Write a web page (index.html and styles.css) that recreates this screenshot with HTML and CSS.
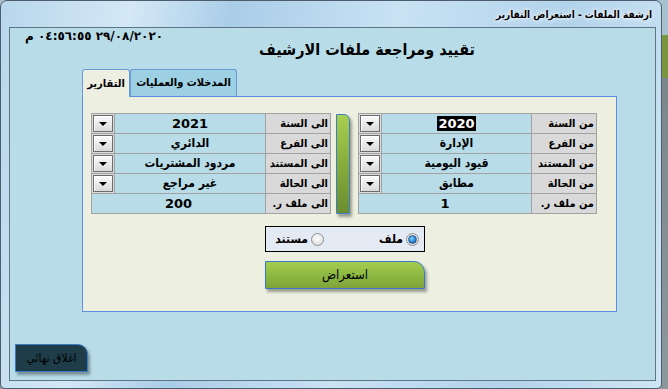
FILE: index.html
```html
<!DOCTYPE html>
<html lang="ar">
<head>
<meta charset="utf-8">
<link rel="stylesheet" href="styles.css">
</head>
<body>
<div class="window">
  <div class="titlebar"><span class="caption">ارشفة الملفات - استعراض التقارير</span></div>
  <div class="client">
    <div class="date" dir="rtl">٢٩/٠٨/٢٠٢٠ ٠٤:٥٦:٥٥ م</div>
    <div class="title" dir="rtl">تقييد ومراجعة ملفات الارشيف</div>
    <div class="tabs">
      <div class="tab active" dir="rtl">التقارير</div>
      <div class="tab" dir="rtl">المدخلات والعمليات</div>
    </div>
    <div class="panel">
      <div class="forms">
        <div class="grid">
          <div class="dd"><span class="ddbtn"></span></div><div class="val num">2021</div><div class="lab" dir="rtl">الى السنة</div>
          <div class="dd"><span class="ddbtn"></span></div><div class="val" dir="rtl">الدائري</div><div class="lab" dir="rtl">الى الفرع</div>
          <div class="dd"><span class="ddbtn"></span></div><div class="val" dir="rtl">مردود المشتريات</div><div class="lab" dir="rtl">الى المستند</div>
          <div class="dd"><span class="ddbtn"></span></div><div class="val" dir="rtl">غير مراجع</div><div class="lab" dir="rtl">الى الحالة</div>
          <div class="val wide num">200</div><div class="lab" dir="rtl">الى ملف ر.</div>
        </div>
        <div class="bar"></div>
        <div class="grid right">
          <div class="dd"><span class="ddbtn"></span></div><div class="val num"><span class="sel">2020</span></div><div class="lab" dir="rtl">من السنة</div>
          <div class="dd"><span class="ddbtn"></span></div><div class="val" dir="rtl">الإدارة</div><div class="lab" dir="rtl">من الفرع</div>
          <div class="dd"><span class="ddbtn"></span></div><div class="val" dir="rtl">قيود اليومية</div><div class="lab" dir="rtl">من المستند</div>
          <div class="dd"><span class="ddbtn"></span></div><div class="val" dir="rtl">مطابق</div><div class="lab" dir="rtl">من الحالة</div>
          <div class="val wide num">1</div><div class="lab" dir="rtl">من ملف ر.</div>
        </div>
      </div>
      <div class="radios" dir="rtl">
        <div class="opt first"><span class="radio checked"></span><span>ملف</span></div>
        <div class="opt"><span class="radio"></span><span>مستند</span></div>
      </div>
      <div class="btn" dir="rtl">استعراض</div>
    </div>
    <div class="close" dir="rtl">اغلاق نهائي</div>
  </div>
</div>
</body>
</html>
```

FILE: styles.css
```css
* { box-sizing: border-box; }

html, body {
  margin: 0;
  padding: 0;
}

body {
  width: 668px;
  height: 389px;
  overflow: hidden;
  background: linear-gradient(#a9c0cf 0, #a9c0cf 35px, #7a9440 35px, #7a9440 78px, #7d868d 78px, #8e979d 389px);
  font-family: "DejaVu Sans Condensed", "DejaVu Sans", sans-serif;
  color: #000;
}

.window {
  width: 662px;
  height: 389px;
  border: 1px solid #4d5d6b;
  border-radius: 7px 7px 5px 5px;
  background: linear-gradient(100deg, #b8d6ec 0%, #d4e8f6 18%, #aacde8 32%, #c9e2f4 55%, #b2d3eb 78%, #cfe5f5 100%);
  display: flex;
  flex-direction: column;
}

.titlebar {
  height: 26px;
  display: flex;
  justify-content: flex-end;
  align-items: center;
  padding-right: 9px;
}

.caption {
  font-size: 10px;
  font-weight: bold;
  text-shadow: 0 0 6px #fff, 0 0 3px #fff;
  direction: rtl;
}

.client {
  margin: 0 5px 0 8px;
  height: 354px;
  border: 1px solid #5e7383;
  background: #b8dde8;
}

.date {
  height: 12px;
  padding-top: 2px;
  padding-left: 15px;
  line-height: 13px;
  font-size: 12px;
  font-weight: bold;
  text-align: left;
  font-family: "DejaVu Sans", sans-serif;
}

.title {
  width: 400px;
  margin-left: 157px;
  height: 20px;
  line-height: 20px;
  font-size: 16px;
  font-weight: bold;
  text-align: center;
}

.tabs {
  margin-top: 9px;
  margin-left: 72px;
  height: 28px;
  display: flex;
  align-items: flex-start;
}

.tab {
  height: 27px;
  border: 1px solid #6a9ad6;
  border-bottom: none;
  border-radius: 3px 3px 0 0;
  background: #9dd0e3;
  font-size: 11px;
  font-weight: bold;
  line-height: 26px;
  text-align: center;
  width: 107px;
  white-space: nowrap;
  overflow: hidden;
}

.tab.active {
  width: 48px;
  height: 28px;
  background: #edefe0;
  position: relative;
  z-index: 1;
  line-height: 28px;
}

.panel {
  margin-top: -1px;
  margin-left: 72px;
  width: 535px;
  height: 216px;
  border: 1px solid #5d8fde;
  background: #edefe0;
}

.forms {
  margin-top: 16px;
  margin-left: 8px;
  display: flex;
  align-items: flex-start;
}

.grid {
  display: grid;
  grid-template-columns: 22px 150px 64px;
  grid-auto-rows: 19px;
  gap: 1px;
  padding: 1px;
  background: #a2a2a2;
}

.grid.right {
  grid-template-columns: 22px 149px 64px;
}

.dd {
  background: #dcdcdc;
  padding: 1px;
}

.ddbtn {
  display: flex;
  align-items: center;
  justify-content: center;
  width: 20px;
  height: 17px;
  border: 1px solid #6c6c6c;
  background: linear-gradient(#fbfbfb, #dadada);
  box-shadow: inset 1px 1px 0 #fff;
}

.ddbtn::after {
  content: "";
  width: 0;
  height: 0;
  border-left: 4px solid transparent;
  border-right: 4px solid transparent;
  border-top: 4px solid #000;
  margin-top: 1px;
}

.val {
  background: #b8dde8;
  font-size: 12px;
  font-weight: bold;
  line-height: 19px;
  text-align: center;
  white-space: nowrap;
  overflow: hidden;
}

.val.num {
  font-size: 13px;
  font-family: "DejaVu Sans", sans-serif;
}

.val.wide {
  grid-column: span 2;
}

.sel {
  background: #000;
  color: #fff;
  padding: 0 1px;
}

.lab {
  background: #d9d9d9;
  font-size: 11px;
  font-weight: bold;
  line-height: 19px;
  text-align: right;
  padding-right: 2px;
  white-space: nowrap;
  overflow: hidden;
}

.bar {
  margin-top: 1px;
  margin-left: 5px;
  margin-right: 8px;
  width: 14px;
  height: 100px;
  border: 1px solid #3e7fc4;
  border-radius: 0 6px 0 0;
  background: linear-gradient(#a8cf4f, #86ad3c 50%, #6a8d2f);
  box-shadow: 2px 3px 3px rgba(0, 0, 0, 0.35);
}

.radios {
  margin-top: 12px;
  margin-left: 182px;
  width: 160px;
  height: 26px;
  border: 1px solid #000;
  background: #e3eaf3;
  display: flex;
  align-items: center;
  padding-right: 5px;
  font-size: 12px;
  font-weight: bold;
}

.opt {
  display: flex;
  align-items: center;
  gap: 3px;
}

.opt.first {
  margin-left: 55px;
}

.radio {
  width: 13px;
  height: 13px;
  border-radius: 50%;
  border: 1px solid #8e8f8f;
  background: radial-gradient(circle at 50% 40%, #ffffff, #d6d6d6);
  display: flex;
  align-items: center;
  justify-content: center;
}

.radio.checked::after {
  content: "";
  width: 7px;
  height: 7px;
  border-radius: 50%;
  background: radial-gradient(circle at 40% 35%, #7fd0ff, #1a6fc9 70%, #0d4f9a);
  border: 1px solid #2b5c8a;
}

.btn {
  margin-top: 9px;
  margin-left: 182px;
  width: 160px;
  height: 28px;
  border: 1px solid #3a78c6;
  border-radius: 0 11px 0 0;
  background: linear-gradient(#a5cd50, #8db942 50%, #7ea33a);
  box-shadow: 2px 3px 3px rgba(0, 0, 0, 0.35);
  font-size: 13px;
  line-height: 26px;
  text-align: center;
}

.close {
  margin-top: 32px;
  margin-left: 5px;
  width: 73px;
  height: 28px;
  border: 1px solid #3a7cc6;
  border-radius: 0 10px 0 0;
  background: #1e3d49;
  box-shadow: 2px 3px 3px rgba(0, 0, 0, 0.35);
  font-size: 12px;
  line-height: 26px;
  text-align: center;
  color: #000;
}
```
